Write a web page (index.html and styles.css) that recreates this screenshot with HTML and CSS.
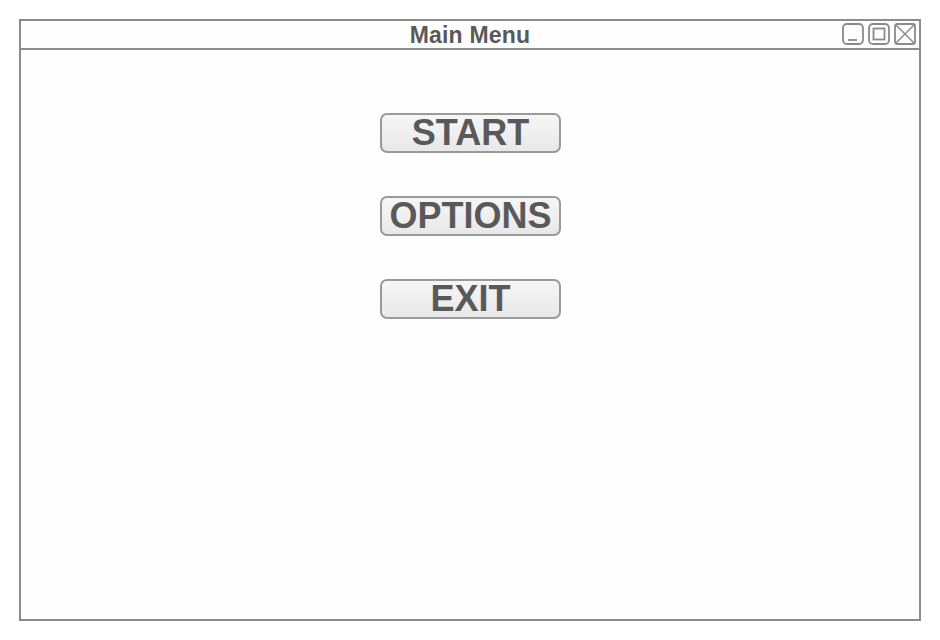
FILE: index.html
```html
<!DOCTYPE html>
<html>
<head>
<meta charset="utf-8">
<link rel="stylesheet" href="styles.css">
</head>
<body>
<div class="window">
  <div class="titlebar">
    <div class="spacer"></div>
    <div class="title">Main Menu</div>
    <div class="controls">
      <svg class="ctl" width="22" height="22" viewBox="0 0 22 22"><rect x="1" y="1" width="20" height="20" rx="4" fill="none" stroke="#8a8a8a" stroke-width="1.8"/><line x1="6" y1="17" x2="15" y2="17" stroke="#8a8a8a" stroke-width="1.8"/></svg>
      <svg class="ctl" width="22" height="22" viewBox="0 0 22 22"><rect x="1" y="1" width="20" height="20" rx="4" fill="none" stroke="#8a8a8a" stroke-width="1.8"/><rect x="5.5" y="5.5" width="11" height="11" fill="none" stroke="#8a8a8a" stroke-width="1.8"/></svg>
      <svg class="ctl" width="22" height="22" viewBox="0 0 22 22"><rect x="1" y="1" width="20" height="20" rx="2" fill="none" stroke="#8a8a8a" stroke-width="1.8"/><line x1="1.5" y1="1.5" x2="20.5" y2="20.5" stroke="#8a8a8a" stroke-width="1.5"/><line x1="20.5" y1="1.5" x2="1.5" y2="20.5" stroke="#8a8a8a" stroke-width="1.5"/></svg>
    </div>
  </div>
  <div class="content">
    <button class="btn">START</button>
    <button class="btn">OPTIONS</button>
    <button class="btn">EXIT</button>
  </div>
</div>
</body>
</html>
```
FILE: styles.css
```css
html, body {
  margin: 0;
  padding: 0;
  background: #ffffff;
}
body {
  font-family: "Liberation Sans", Arial, sans-serif;
}
.window {
  box-sizing: border-box;
  margin: 19px 0 0 19px;
  width: 902px;
  height: 602px;
  border: 2px solid #8c8c8c;
  background: #fefefe;
  display: flex;
  flex-direction: column;
}
.titlebar {
  box-sizing: border-box;
  height: 29px;
  border-bottom: 2px solid #8c8c8c;
  display: grid;
  grid-template-columns: 1fr auto 1fr;
  align-items: start;
}
.title {
  font-size: 23px;
  font-weight: bold;
  color: #595959;
  line-height: 29px;
  margin-top: 0;
  letter-spacing: 0.2px;
}
.controls {
  justify-self: end;
  display: flex;
  gap: 4px;
  padding-right: 3px;
  margin-top: 2px;
}
.ctl {
  display: block;
}
.content {
  flex: 1;
  display: flex;
  flex-direction: column;
  align-items: center;
  padding-top: 63px;
  gap: 43px;
}
.btn {
  box-sizing: border-box;
  width: 181px;
  height: 40px;
  margin-left: 1px;
  border: 2px solid #9a9a9a;
  border-radius: 7px;
  background: linear-gradient(#f6f6f6, #e8e8e8);
  font-family: "Liberation Sans", Arial, sans-serif;
  font-weight: bold;
  font-size: 36px;
  color: #595959;
  padding: 0;
  line-height: 38px;
  display: flex;
  align-items: center;
  justify-content: center;
}
```
